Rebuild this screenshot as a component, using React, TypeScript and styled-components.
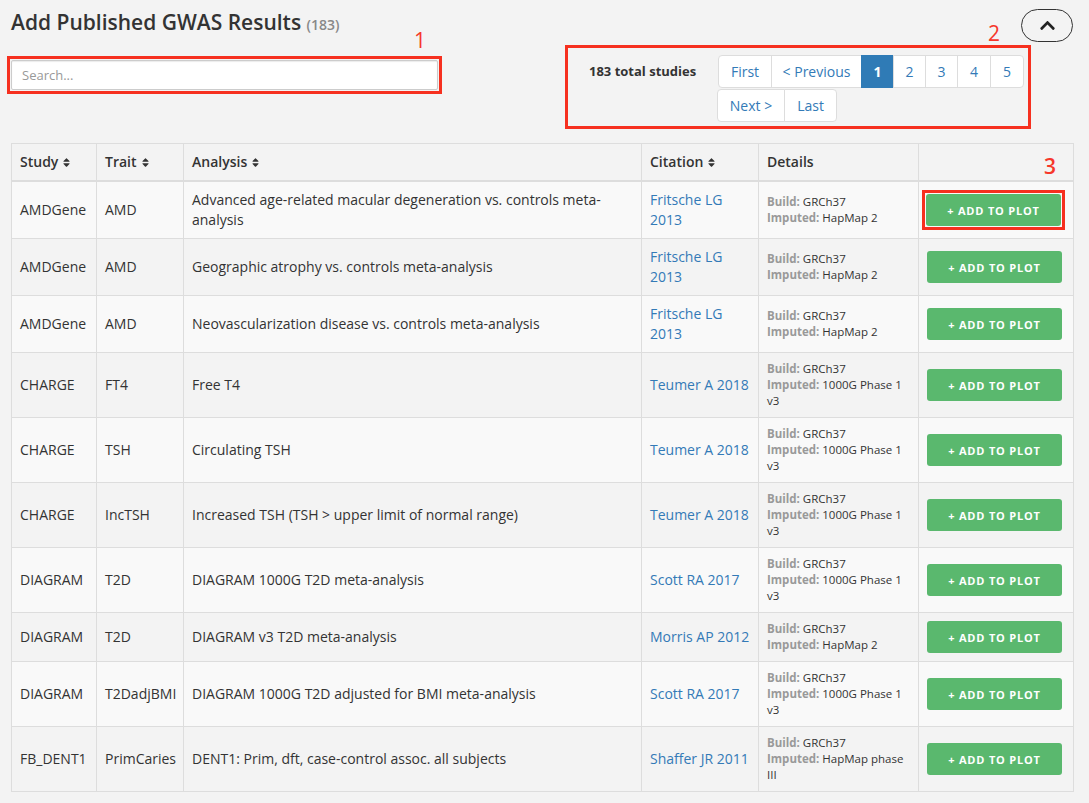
import React from 'react';
import styled, { createGlobalStyle } from 'styled-components';
import { FaSort, FaChevronUp } from 'react-icons/fa';

const GlobalStyle = createGlobalStyle`
    body {
        margin: 0;
        background-color: #f3f3f3;
        font-family: "Open Sans", "Liberation Sans", sans-serif;
        color: #333;
    }
`;

const Page = styled.div`
    padding: 8px 16px 12px 11px;
    width: 1062px;
`;

const Top = styled.div`
    display: flex;
    justify-content: space-between;
    align-items: flex-start;
`;

const LeftCol = styled.div`
    display: flex;
    flex-direction: column;
    position: relative;
`;

const Title = styled.h2`
    margin: 0;
    font-size: 21px;
    font-weight: 600;
    line-height: 28px;
    color: #333;
`;

const Count = styled.span`
    font-size: 14px;
    font-weight: 600;
    color: #888;
`;

const Marker = styled.span<{ $top: number; $left?: number; $right?: number }>`
    position: absolute;
    top: ${p => p.$top}px;
    ${p => (p.$right !== undefined ? `right: ${p.$right}px;` : `left: ${p.$left}px;`)}
    font-size: 21px;
    color: #f6372a;
    line-height: 1;
`;

const Highlight = styled.div`
    border: 3px solid #f6301f;
`;

const SearchBox = styled(Highlight)`
    margin-top: 17px;
    margin-left: -4px;
    padding: 1px;
    width: 427px;
`;

const SearchInput = styled.input`
    display: block;
    box-sizing: border-box;
    width: 100%;
    height: 30px;
    border: 1px solid #ccc;
    border-radius: 2px;
    padding: 0 10px;
    font-family: inherit;
    font-size: 13px;
    color: #555;
    background: #fff;
    box-shadow: inset 0 1px 1px rgba(0, 0, 0, 0.08);
    &::placeholder {
        color: #999;
    }
`;

const RightCol = styled.div`
    display: flex;
    flex-direction: column;
    align-items: flex-end;
    position: relative;
`;

const CollapseButton = styled.button`
    display: flex;
    align-items: center;
    justify-content: center;
    width: 52px;
    height: 33px;
    margin-top: 1px;
    border: 1px solid #333;
    border-radius: 17px;
    background: transparent;
    color: #222;
    font-size: 17px;
    padding: 0;
`;

const PagerBox = styled(Highlight)`
    display: flex;
    align-items: flex-start;
    margin-top: 3px;
    margin-right: 42px;
    width: 466px;
    height: 84px;
    box-sizing: border-box;
    padding: 7px 2px 0 21px;
`;

const Total = styled.div`
    flex-shrink: 0;
    font-size: 13px;
    font-weight: 700;
    margin-top: 7px;
    width: 129px;
`;

const Pager = styled.div`
    display: flex;
    flex-direction: column;
    gap: 1px;
`;

const PageRow = styled.div<{ $shift?: number }>`
    display: flex;
    margin-left: ${p => p.$shift || 0}px;
`;

const PageItem = styled.span<{ $active?: boolean; $w: number }>`
    display: flex;
    align-items: center;
    justify-content: center;
    flex-shrink: 0;
    box-sizing: border-box;
    width: ${p => p.$w}px;
    height: 33px;
    font-size: 14px;
    background: ${p => (p.$active ? '#2f7bb6' : '#fff')};
    color: ${p => (p.$active ? '#fff' : '#337ab7')};
    font-weight: ${p => (p.$active ? 700 : 400)};
    border: 1px solid ${p => (p.$active ? '#2f7bb6' : '#ddd')};
    margin-left: -1px;
    &:first-child {
        margin-left: 0;
        border-radius: 4px 0 0 4px;
    }
    &:last-child {
        border-radius: 0 4px 4px 0;
    }
`;

const Table = styled.table`
    margin-top: 14px;
    border-collapse: collapse;
    table-layout: fixed;
    width: 1062px;
    font-size: 14px;
    background: #f3f3f3;
`;

const Th = styled.th`
    text-align: left;
    font-weight: 600;
    padding: 8px;
    line-height: 20px;
    border: 1px solid #ddd;
    border-bottom: 2px solid #ddd;
    position: relative;
    svg {
        font-size: 11px;
        margin-left: 3px;
        vertical-align: -1px;
    }
`;

const Row = styled.tr`
    &:nth-child(odd) {
        background: #f9f9f9;
    }
`;

const Td = styled.td`
    padding: 8px;
    line-height: 20px;
    border: 1px solid #ddd;
    vertical-align: middle;
`;

const CiteLink = styled.a`
    color: #337ab7;
    text-decoration: none;
`;

const Details = styled.div`
    font-size: 11.5px;
    line-height: 16px;
`;

const Label = styled.span`
    color: #999;
    font-weight: 700;
`;

const AddButton = styled.button`
    display: block;
    width: 135px;
    height: 32px;
    margin: 0;
    border: none;
    border-radius: 3px;
    background: #5ab86e;
    color: #fff;
    font-family: inherit;
    font-size: 11px;
    font-weight: 700;
    letter-spacing: 0.8px;
    cursor: pointer;
`;

const ButtonHighlight = styled(Highlight)`
    display: inline-block;
    vertical-align: middle;
    padding: 1px;
    margin-left: -5px;
`;

type Study = {
    study: string;
    trait: string;
    analysis: string;
    citation: string;
    imputed: string;
};

const studies: Study[] = [
    { study: 'AMDGene', trait: 'AMD', analysis: 'Advanced age-related macular degeneration vs. controls meta-analysis', citation: 'Fritsche LG 2013', imputed: 'HapMap 2' },
    { study: 'AMDGene', trait: 'AMD', analysis: 'Geographic atrophy vs. controls meta-analysis', citation: 'Fritsche LG 2013', imputed: 'HapMap 2' },
    { study: 'AMDGene', trait: 'AMD', analysis: 'Neovascularization disease vs. controls meta-analysis', citation: 'Fritsche LG 2013', imputed: 'HapMap 2' },
    { study: 'CHARGE', trait: 'FT4', analysis: 'Free T4', citation: 'Teumer A 2018', imputed: '1000G Phase 1 v3' },
    { study: 'CHARGE', trait: 'TSH', analysis: 'Circulating TSH', citation: 'Teumer A 2018', imputed: '1000G Phase 1 v3' },
    { study: 'CHARGE', trait: 'IncTSH', analysis: 'Increased TSH (TSH > upper limit of normal range)', citation: 'Teumer A 2018', imputed: '1000G Phase 1 v3' },
    { study: 'DIAGRAM', trait: 'T2D', analysis: 'DIAGRAM 1000G T2D meta-analysis', citation: 'Scott RA 2017', imputed: '1000G Phase 1 v3' },
    { study: 'DIAGRAM', trait: 'T2D', analysis: 'DIAGRAM v3 T2D meta-analysis', citation: 'Morris AP 2012', imputed: 'HapMap 2' },
    { study: 'DIAGRAM', trait: 'T2DadjBMI', analysis: 'DIAGRAM 1000G T2D adjusted for BMI meta-analysis', citation: 'Scott RA 2017', imputed: '1000G Phase 1 v3' },
    { study: 'FB_DENT1', trait: 'PrimCaries', analysis: 'DENT1: Prim, dft, case-control assoc. all subjects', citation: 'Shaffer JR 2011', imputed: 'HapMap phase III' },
];

const App: React.FC = () => {
    return (
        <Page>
            <GlobalStyle />
            <Top>
                <LeftCol>
                    <Title>Add Published GWAS Results <Count>(183)</Count></Title>
                    <Marker $top={22} $left={403}>1</Marker>
                    <SearchBox>
                        <SearchInput placeholder="Search..." />
                    </SearchBox>
                </LeftCol>
                <RightCol>
                    <Marker $top={15} $right={73}>2</Marker>
                    <CollapseButton><FaChevronUp /></CollapseButton>
                    <PagerBox>
                        <Total>183 total studies</Total>
                        <Pager>
                            <PageRow>
                                <PageItem $w={54}>First</PageItem>
                                <PageItem $w={91}>&lt; Previous</PageItem>
                                <PageItem $w={33} $active>1</PageItem>
                                <PageItem $w={33}>2</PageItem>
                                <PageItem $w={33}>3</PageItem>
                                <PageItem $w={34}>4</PageItem>
                                <PageItem $w={34}>5</PageItem>
                            </PageRow>
                            <PageRow $shift={-1}>
                                <PageItem $w={68}>Next &gt;</PageItem>
                                <PageItem $w={53}>Last</PageItem>
                            </PageRow>
                        </Pager>
                    </PagerBox>
                </RightCol>
            </Top>
            <Table>
                <colgroup>
                    <col style={{ width: 85 }} />
                    <col style={{ width: 87 }} />
                    <col style={{ width: 458 }} />
                    <col style={{ width: 117 }} />
                    <col style={{ width: 160 }} />
                    <col style={{ width: 155 }} />
                </colgroup>
                <thead>
                    <tr>
                        <Th>Study<FaSort /></Th>
                        <Th>Trait<FaSort /></Th>
                        <Th>Analysis<FaSort /></Th>
                        <Th>Citation<FaSort /></Th>
                        <Th>Details</Th>
                        <Th>
                            <Marker $top={12} $left={125}>3</Marker>
                        </Th>
                    </tr>
                </thead>
                <tbody>
                    {studies.map((s, i) => (
                        <Row key={i}>
                            <Td>{s.study}</Td>
                            <Td>{s.trait}</Td>
                            <Td>{s.analysis}</Td>
                            <Td><CiteLink href="#">{s.citation}</CiteLink></Td>
                            <Td>
                                <Details>
                                    <Label>Build:</Label> GRCh37<br />
                                    <Label>Imputed:</Label> {s.imputed}
                                </Details>
                            </Td>
                            <Td>
                                {i === 0 ? (
                                    <ButtonHighlight>
                                        <AddButton>+ ADD TO PLOT</AddButton>
                                    </ButtonHighlight>
                                ) : (
                                    <AddButton>+ ADD TO PLOT</AddButton>
                                )}
                            </Td>
                        </Row>
                    ))}
                </tbody>
            </Table>
        </Page>
    );
};

export default App;
